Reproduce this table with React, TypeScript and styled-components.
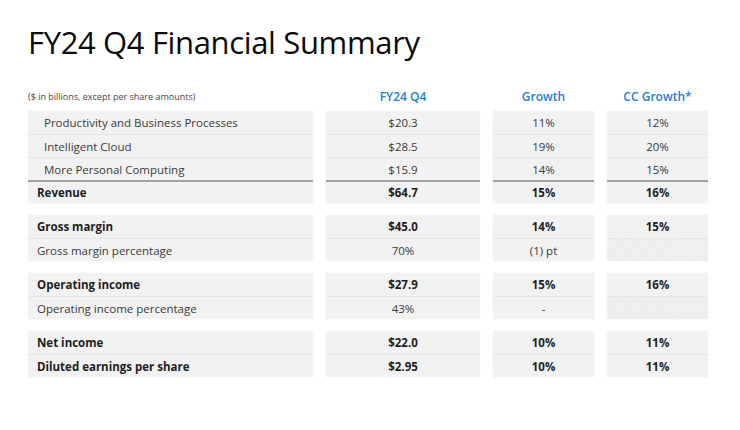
import React from "react";
import styled, { createGlobalStyle, css } from "styled-components";

const Global = createGlobalStyle`
  html, body { margin: 0; padding: 0; background: #ffffff; }
  body { font-family: "Open Sans", "Noto Sans", sans-serif; }
`;

const Page = styled.div`
  width: 740px;
  height: 430px;
  box-sizing: border-box;
  padding: 21px 0 0 28px;
  background: #fff;
`;

const Title = styled.h1`
  margin: 0;
  font-size: 31px;
  font-weight: 400;
  color: #0a0a0a;
  letter-spacing: -0.35px;
  line-height: 42px;
`;

const Grid = styled.div`
  display: grid;
  grid-template-columns: 285px 154px 101px 101px;
  column-gap: 13px;
`;

const HeaderRow = styled(Grid)`
  margin-top: 22px;
  height: 22px;
  align-items: center;
`;

const Note = styled.div`
  font-size: 9px;
  color: #444;
`;

const ColHead = styled.div`
  text-align: center;
  font-size: 12px;
  font-weight: 600;
  color: #2180d6;
`;

const Groups = styled.div`
  display: flex;
  flex-direction: column;
  gap: 12px;
  margin-top: 4px;
`;

const Block = styled.div`
  background: #f2f2f2;
  box-shadow: 0 0 2px rgba(0, 0, 0, 0.05);
  display: flex;
  flex-direction: column;
`;

const Cell = styled.div<{ $bold?: boolean; $total?: boolean; $indent?: boolean; $label?: boolean; $hatch?: boolean; $first?: boolean }>`
  height: 23px;
  box-sizing: border-box;
  display: flex;
  align-items: center;
  justify-content: ${(p) => (p.$label ? "flex-start" : "center")};
  padding-left: ${(p) => (p.$label ? (p.$indent ? "16px" : "9px") : "0")};
  font-size: 11.5px;
  color: ${(p) => (p.$bold ? "#1e1e1e" : "#3a3a3a")};
  font-weight: ${(p) => (p.$bold ? 700 : 400)};
  border-top: ${(p) => (p.$first ? "none" : p.$total ? "2px solid #a3a3a3" : "1px solid #e6e6e6")};
  ${(p) =>
    p.$hatch &&
    css`
      background: repeating-linear-gradient(
        -45deg,
        #f1f1f1 0px,
        #f1f1f1 2px,
        #e9e9e9 2px,
        #e9e9e9 3px
      );
    `}
`;

type Row = {
  label: string;
  vals: [string, string, string | null];
  bold?: boolean;
  indent?: boolean;
  total?: boolean;
};

const groups: Row[][] = [
  [
    { label: "Productivity and Business Processes", vals: ["$20.3", "11%", "12%"], indent: true },
    { label: "Intelligent Cloud", vals: ["$28.5", "19%", "20%"], indent: true },
    { label: "More Personal Computing", vals: ["$15.9", "14%", "15%"], indent: true },
    { label: "Revenue", vals: ["$64.7", "15%", "16%"], bold: true, total: true },
  ],
  [
    { label: "Gross margin", vals: ["$45.0", "14%", "15%"], bold: true },
    { label: "Gross margin percentage", vals: ["70%", "(1) pt", null] },
  ],
  [
    { label: "Operating income", vals: ["$27.9", "15%", "16%"], bold: true },
    { label: "Operating income percentage", vals: ["43%", "-", null] },
  ],
  [
    { label: "Net income", vals: ["$22.0", "10%", "11%"], bold: true },
    { label: "Diluted earnings per share", vals: ["$2.95", "10%", "11%"], bold: true },
  ],
];

export default function App() {
  return (
    <>
      <Global />
      <Page>
        <Title>FY24 Q4 Financial Summary</Title>
        <HeaderRow>
          <Note>($ in billions, except per share amounts)</Note>
          <ColHead>FY24 Q4</ColHead>
          <ColHead>Growth</ColHead>
          <ColHead>CC Growth*</ColHead>
        </HeaderRow>
        <Groups>
          {groups.map((g, gi) => (
            <Grid key={gi}>
              <Block>
                {g.map((r, i) => (
                  <Cell key={i} $label $first={i === 0} $bold={r.bold} $indent={r.indent} $total={r.total}>
                    {r.label}
                  </Cell>
                ))}
              </Block>
              {[0, 1, 2].map((c) => (
                <Block key={c}>
                  {g.map((r, i) => (
                    <Cell key={i} $first={i === 0} $bold={r.bold} $total={r.total} $hatch={r.vals[c] === null}>
                      {r.vals[c] ?? ""}
                    </Cell>
                  ))}
                </Block>
              ))}
            </Grid>
          ))}
        </Groups>
      </Page>
    </>
  );
}
